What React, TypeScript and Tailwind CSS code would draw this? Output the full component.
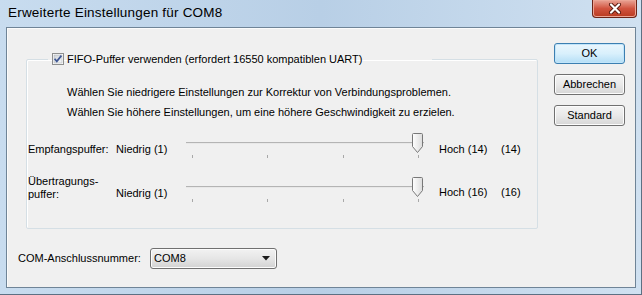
import React from "react";

const FONT = "font-['Liberation_Sans',Arial,sans-serif]";

const CheckIcon: React.FC = () => (
	<svg width="12" height="12" viewBox="0 0 12 12">
		<defs>
			<linearGradient id="cbg" x1="0" y1="0" x2="1" y2="1">
				<stop offset="0" stopColor="#cfd3d8" />
				<stop offset="1" stopColor="#f6f7f8" />
			</linearGradient>
		</defs>
		<rect x="0.5" y="0.5" width="11" height="11" fill="#fff" stroke="#8e8f8f" />
		<rect x="2" y="2" width="8" height="8" fill="url(#cbg)" stroke="#b0b4b9" strokeWidth="0.6" />
		<path d="M2.6 5.8 L4.8 8.4 L9.4 2.6" fill="none" stroke="#3f5794" strokeWidth="1.7" />
	</svg>
);

const Thumb: React.FC = () => (
	<svg width="11" height="20" viewBox="0 0 11 20">
		<defs>
			<linearGradient id="thg" x1="0" y1="0" x2="1" y2="0">
				<stop offset="0" stopColor="#ffffff" />
				<stop offset="1" stopColor="#dcdcdc" />
			</linearGradient>
		</defs>
		<path d="M0.5 1.5 Q0.5 0.5 1.5 0.5 H9.5 Q10.5 0.5 10.5 1.5 V13.5 L5.5 19.5 L0.5 13.5 Z" fill="url(#thg)" stroke="#787878" />
	</svg>
);

const Slider: React.FC = () => (
	<div className="relative w-[238px] h-[28px]">
		<div className="absolute left-0 right-0 top-[9px] h-[2px] border-t border-[#b4b4b4] bg-[#e8e8e8]" />
		{[6, 81, 157, 232].map((x) => (
			<div key={x} className="absolute top-[22px] w-px h-[3px] bg-[#a8a8a8]" style={{ left: x }} />
		))}
		<div className="absolute left-[226px] top-0">
			<Thumb />
		</div>
	</div>
);

const Button: React.FC<{ label: string; primary?: boolean }> = ({ label, primary }) => (
	<button
		className={
			primary
				? "w-[71px] h-[21px] rounded-[3px] border border-[#3c7fb1] bg-gradient-to-b from-[#eaf6fd] via-[#d9f0fc] to-[#b4def6] text-[11px] leading-none shadow-[inset_0_0_0_1px_#c2e5fa]"
				: "w-[71px] h-[21px] rounded-[3px] border border-[#707070] bg-gradient-to-b from-[#f4f4f4] via-[#e9e9e9] to-[#d6d6d6] text-[11px] leading-none shadow-[inset_0_0_0_1px_#fcfcfc]"
		}
	>
		{label}
	</button>
);

const App: React.FC = () => {
	return (
		<div className={`w-[642px] h-[295px] flex flex-col bg-gradient-to-r from-[#c8dcef] via-[#b8cfe6] to-[#d0e1f1] border-r border-b border-[#5d7083] text-black ${FONT}`}>
			{/* title bar */}
			<div className="h-[27px] flex items-start justify-between">
				<span className="pl-[8px] pt-[5px] text-[13.5px] tracking-[0.2px] leading-[16px] text-black">
					Erweiterte Einstellungen für COM8
				</span>
				<button className="mr-[4px] w-[45px] h-[18px] rounded-b-[4px] border border-t-0 border-[#6b2418] bg-gradient-to-b from-[#e8a396] via-[#d1533f] to-[#b83a1f] flex items-center justify-center shadow-[inset_0_0_0_1px_#eca595]">
					<svg width="14" height="11" viewBox="0 0 14 11">
						<path d="M3 1.5 L11 9.5 M11 1.5 L3 9.5" stroke="#5a1a10" strokeWidth="4" strokeLinecap="round" />
						<path d="M3 1.5 L11 9.5 M11 1.5 L3 9.5" stroke="#fff" strokeWidth="2.2" strokeLinecap="round" />
					</svg>
				</button>
			</div>

			{/* client */}
			<div className="flex-1 flex pl-[6px] pr-[5px] pb-[6px]">
				<div className="flex-1 flex border border-[#6f8497] bg-[#f0f0f0] shadow-[inset_1px_1px_0_#fbfbfb]">
					<div className="flex flex-col pl-[11px]">
						<fieldset className="ml-[8px] mt-[24px] w-[512px] h-[177px] border border-[#d5dfe5] rounded-[2px] shadow-[inset_1px_1px_0_#ffffff]">
							<legend className="ml-[21px] w-[384px] h-[14px] pl-[4px] flex items-center gap-[3px] text-[11px]">
								<CheckIcon />
								<span className="leading-[14px]">FIFO-Puffer verwenden (erfordert 16550 kompatiblen UART)</span>
							</legend>
							<div className="pl-[40px] text-[11px] leading-[14px]">
								<div className="mt-[19px]">Wählen Sie niedrigere Einstellungen zur Korrektur von Verbindungsproblemen.</div>
								<div className="mt-[6px]">Wählen Sie höhere Einstellungen, um eine höhere Geschwindigkeit zu erzielen.</div>
							</div>
							<div className="mt-[14px] text-[11px] leading-[13px]">
								<div className="flex items-start h-[44px]">
									<div className="w-[89px] pl-[1px] mt-[10px]">Empfangspuffer:</div>
									<div className="w-[70px] mt-[10px]">Niedrig (1)</div>
									<Slider />
									<div className="ml-[15px] w-[62px] mt-[10px]">Hoch (14)</div>
									<div className="mt-[10px]">(14)</div>
								</div>
								<div className="flex items-start h-[44px]">
									<div className="w-[89px] pl-[1px] -mt-[2px]">
										Übertragungs-
										<br />
										puffer:
									</div>
									<div className="w-[70px] mt-[10px]">Niedrig (1)</div>
									<Slider />
									<div className="ml-[15px] w-[62px] mt-[9px]">Hoch (16)</div>
									<div className="mt-[9px]">(16)</div>
								</div>
							</div>
						</fieldset>

						<div className="mt-[19px] flex items-center text-[11px]">
							<span className="w-[132px]">COM-Anschlussnummer:</span>
							<div className="w-[127px] h-[21px] rounded-[3px] border border-[#707070] bg-gradient-to-b from-[#f2f2f2] via-[#e6e6e6] to-[#d2d2d2] shadow-[inset_0_0_0_1px_#fcfcfc] flex items-center justify-between pl-[3px] pr-[6px]">
								<span>COM8</span>
								<svg width="8" height="5" viewBox="0 0 8 5">
									<path d="M0 0 H8 L4 4.5 Z" fill="#1a1a1a" />
								</svg>
							</div>
						</div>
					</div>

					<div className="ml-auto mr-[10px] mt-[15px] flex flex-col gap-[10px]">
						<Button label="OK" primary />
						<Button label="Abbrechen" />
						<Button label="Standard" />
					</div>
				</div>
			</div>
		</div>
	);
};

export default App;
